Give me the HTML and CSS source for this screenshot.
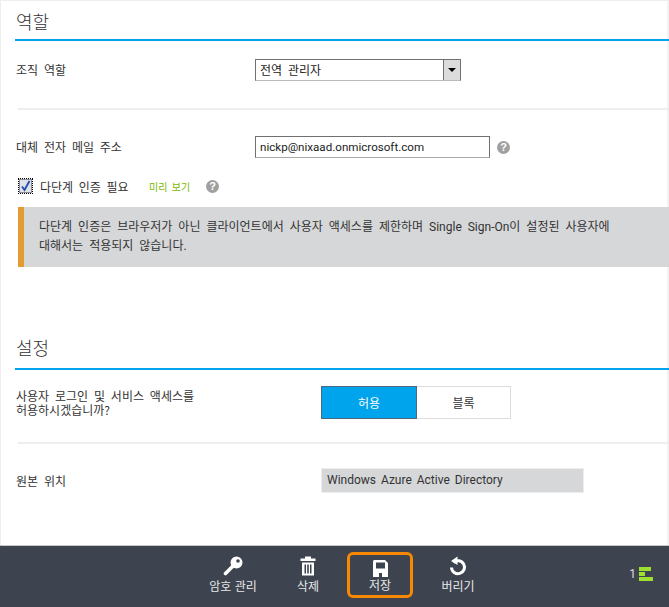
FILE: index.html
```html
<!DOCTYPE html>
<html lang="ko">
<head>
    <meta charset="UTF-8">
    <title>역할</title>
    <link rel="stylesheet" href="styles.css">
</head>
<body>
    <main class="content">
        <h2 class="section-title first">역할</h2>

        <div class="row role-row">
            <label class="row-label">조직 역할</label>
            <div class="select">
                <span class="select-value">전역 관리자</span>
                <span class="select-btn"><span class="select-arrow"></span></span>
            </div>
        </div>

        <hr class="divider">

        <div class="row email-row">
            <label class="row-label">대체 전자 메일 주소</label>
            <div class="text-input">nickp@nixaad.onmicrosoft.com</div>
            <span class="help help-email">?</span>
        </div>

        <div class="mfa-row">
            <span class="checkbox-focus">
                <span class="checkbox">
                    <svg width="11" height="12" viewBox="0 0 11 12"><path d="M2 6.5 L4.5 10 L9.5 1" fill="none" stroke="#2f4fb0" stroke-width="2"/></svg>
                </span>
            </span>
            <span class="mfa-label">다단계 인증 필요</span>
            <span class="preview">미리 보기</span>
            <span class="help">?</span>
        </div>

        <div class="notice">
            다단계 인증은 브라우저가 아닌 클라이언트에서 사용자 액세스를 제한하며 Single Sign-On이 설정된 사용자에<br>
            대해서는 적용되지 않습니다.
        </div>

        <h2 class="section-title second">설정</h2>

        <div class="row access-row">
            <label class="row-label wide">사용자 로그인 및 서비스 액세스를<br>허용하시겠습니까?</label>
            <div class="toggle">
                <span class="toggle-on">허용</span>
                <span class="toggle-off">블록</span>
            </div>
        </div>

        <hr class="divider divider-second">

        <div class="row source-row">
            <label class="row-label wide">원본 위치</label>
            <div class="readonly">Windows Azure Active Directory</div>
        </div>
    </main>

    <footer class="cmdbar">
        <div class="cmd cmd-key">
            <svg width="20" height="20" viewBox="0 0 20 20"><path fill="none" stroke="#fff" stroke-width="3.6" stroke-linecap="round" d="M11 9L2.500 17.500"/><path fill="#fff" fill-rule="evenodd" d="M13.500 0.500a6 6 0 1 1 0 12 6 6 0 0 1 0-12zM15 3.200a1.800 1.800 0 1 0 0 3.600 1.800 1.800 0 0 0 0-3.600z"/></svg>
            <span>암호 관리</span>
        </div>
        <div class="cmd cmd-del">
            <svg width="16" height="19" viewBox="0 0 16 19"><path fill="#fff" d="M5 0h6v2h4.500v2.500H.5V2H5zM2 6h12v13H2zM4.500 8v9h1.500V8zM7.200 8v9h1.600V8zM10 8v9h1.500V8z" fill-rule="evenodd"/></svg>
            <span>삭제</span>
        </div>
        <div class="cmd cmd-save">
            <svg width="15" height="17" viewBox="0 0 15 17"><path fill="#fff" fill-rule="evenodd" d="M1 0h11l3 3v14H0V1zM3 2.500v6h9v-6zM6 13v4h3v-4z"/></svg>
            <span>저장</span>
        </div>
        <div class="cmd cmd-undo">
            <svg width="20" height="20" viewBox="0 0 20 20"><path fill="none" stroke="#fff" stroke-width="3" d="M5.500 6.500A6.500 6.500 0 1 1 3.500 11.500"/><path fill="#fff" d="M9.500 0.500V9L3 5z"/></svg>
            <span>버리기</span>
        </div>
        <div class="progress">
            <span class="progress-count">1</span>
            <span class="progress-bars"><i class="bar-a"></i><i class="bar-b"></i><i class="bar-c"></i></span>
        </div>
    </footer>
</body>
</html>
```

FILE: styles.css
```css
html, body {
    margin: 0;
    height: 100%;
}

body {
    width: 669px;
    height: 607px;
    overflow: hidden;
    display: flex;
    flex-direction: column;
    font-family: Roboto, "Noto Sans CJK KR", sans-serif;
    font-size: 12px;
    color: #333;
    background: #fff;
}

/* --- Content --- */
.content {
    flex: 1;
    box-sizing: border-box;
    border-top: 1px solid #eee;
    border-left: 1px solid #eee;
    border-right: 2px solid #f2f2f2;
    padding-left: 14px;
}

.section-title {
    margin: 0;
    height: 24px;
    padding-bottom: 3px;
    font-family: "Noto Sans CJK KR", sans-serif;
    font-size: 18px;
    font-weight: 300;
    line-height: 24px;
    color: #333;
    border-bottom: 2px solid #00a4ec;
    margin-right: -2px;
    padding-left: 1px;
}

.section-title.first {
    padding-top: 8px;
    padding-bottom: 6px;
}

.section-title.second {
    margin-top: 68px;
    padding-bottom: 9px;
}

.row {
    display: flex;
    align-items: center;
    padding-left: 1px;
}

.row-label {
    width: 239px;
    font-family: "Noto Sans CJK KR", sans-serif;
    font-size: 12px;
    line-height: 14px;
    word-spacing: 2.5px;
    color: #333;
}

.row-label.wide {
    width: 305px;
}

.role-row {
    margin-top: 18px;
}

.select {
    display: flex;
    box-sizing: border-box;
    width: 206px;
    height: 22px;
    border: 1px solid #707070;
    border-bottom-color: #bbb;
}

.select-value {
    flex: 1;
    padding-left: 4px;
    font-family: "Noto Sans CJK KR", sans-serif;
    line-height: 20px;
    word-spacing: 2.5px;
    color: #222;
}

.select-btn {
    display: flex;
    align-items: center;
    justify-content: center;
    width: 16px;
    border-left: 1px solid #707070;
    background: #dcdcdc;
}

.select-arrow {
    width: 0;
    height: 0;
    border-left: 4px solid transparent;
    border-right: 4px solid transparent;
    border-top: 4px solid #000;
}

.divider {
    height: 2px;
    margin: 27px -2px 0 3px;
    border: 0;
    background: #eee;
}

.email-row {
    margin-top: 26px;
}

.text-input {
    box-sizing: border-box;
    width: 235px;
    height: 22px;
    padding-left: 4px;
    border: 1px solid #707070;
    border-bottom-color: #aaa;
    font-size: 11.6px;
    line-height: 20px;
    color: #222;
}

.help {
    display: inline-block;
    width: 13px;
    height: 13px;
    border-radius: 50%;
    background: #a0a0a0;
    color: #fff;
    font-family: "Liberation Sans", sans-serif;
    font-size: 11px;
    font-weight: 700;
    line-height: 13px;
    text-align: center;
}

.help-email {
    margin-left: 7px;
}

.mfa-row {
    display: flex;
    align-items: center;
    height: 18px;
    margin-top: 19px;
    padding-left: 3px;
}

.checkbox-focus {
    display: flex;
    align-items: center;
    justify-content: center;
    box-sizing: border-box;
    width: 15px;
    height: 16px;
    border: 1px dotted #000;
}

.checkbox {
    display: flex;
    box-sizing: border-box;
    width: 13px;
    height: 14px;
    align-items: center;
    justify-content: center;
    border: 1px solid #8a8a9a;
    background: #dfe3ea;
}

.mfa-label {
    margin-left: 7px;
    width: 109px;
    font-family: "Noto Sans CJK KR", sans-serif;
    word-spacing: 2.3px;
    color: #333;
}

.preview {
    width: 57px;
    font-family: "Noto Sans CJK KR", sans-serif;
    font-size: 10px;
    word-spacing: 1.5px;
    color: #7ab800;
}

.notice {
    box-sizing: border-box;
    height: 60px;
    margin: 12px -2px 0 3px;
    padding: 11px 0 0 15px;
    border-left: 6px solid #e59b34;
    background: #d6d7d9;
    font-family: Roboto, "Noto Sans CJK KR", sans-serif;
    font-size: 12px;
    line-height: 19px;
    word-spacing: 3px;
    color: #333;
}

.access-row {
    margin-top: 16px;
}

.toggle {
    display: flex;
    box-sizing: border-box;
    width: 190px;
    height: 33px;
    font-family: "Noto Sans CJK KR", sans-serif;
    text-align: center;
    line-height: 31px;
}

.toggle-on {
    box-sizing: border-box;
    width: 96px;
    border: 1px solid #4b6a80;
    background: #00a4ec;
    color: #fff;
}

.toggle-off {
    flex: 1;
    border: 1px solid #ddd;
    border-left: 0;
    color: #333;
}

.divider-second {
    margin-top: 23px;
}

.source-row {
    margin-top: 24px;
}

.readonly {
    box-sizing: border-box;
    width: 263px;
    height: 25px;
    padding-left: 5px;
    border: 1px solid #eee;
    background: #d6d7d9;
    line-height: 23px;
    word-spacing: 2px;
    color: #333;
}

/* --- Command bar --- */
.cmdbar {
    position: relative;
    flex: none;
    display: flex;
    height: 62px;
    box-sizing: border-box;
    border-top: 1px solid #c8c8c8;
    background: #3d4450;
    color: #fff;
    padding-left: 208px;
}

.cmd {
    display: flex;
    flex-direction: column;
    align-items: center;
    font-family: "Noto Sans CJK KR", sans-serif;
    font-size: 12px;
    line-height: 14px;
    color: #e8e8e8;
}

.cmd svg {
    display: block;
    height: 20px;
    margin-top: 10px;
    margin-bottom: 3px;
}

.cmd-key { width: 50px; }
.cmd-del { width: 24px; margin-left: 38px; }
.cmd-save {
    box-sizing: border-box;
    width: 66px;
    height: 46px;
    margin: 6px 0 0 27px;
    border: 3px solid #f78800;
    border-radius: 6px;
}
.cmd-save svg {
    height: 17px;
    margin-top: 5px;
    margin-bottom: 1px;
}
.cmd-undo { width: 36px; margin-left: 27px; }

.progress {
    position: absolute;
    right: 16px;
    top: 21px;
    display: flex;
    align-items: center;
    gap: 3px;
}

.progress-count {
    font-size: 12px;
    color: #ddd;
}

.progress-bars {
    display: flex;
    flex-direction: column;
    gap: 1px;
}

.progress-bars i {
    display: block;
    height: 4px;
    background: #9fdf30;
}

.bar-a { width: 12px; }
.bar-b { width: 6px; }
.bar-c { width: 14px; }
```
